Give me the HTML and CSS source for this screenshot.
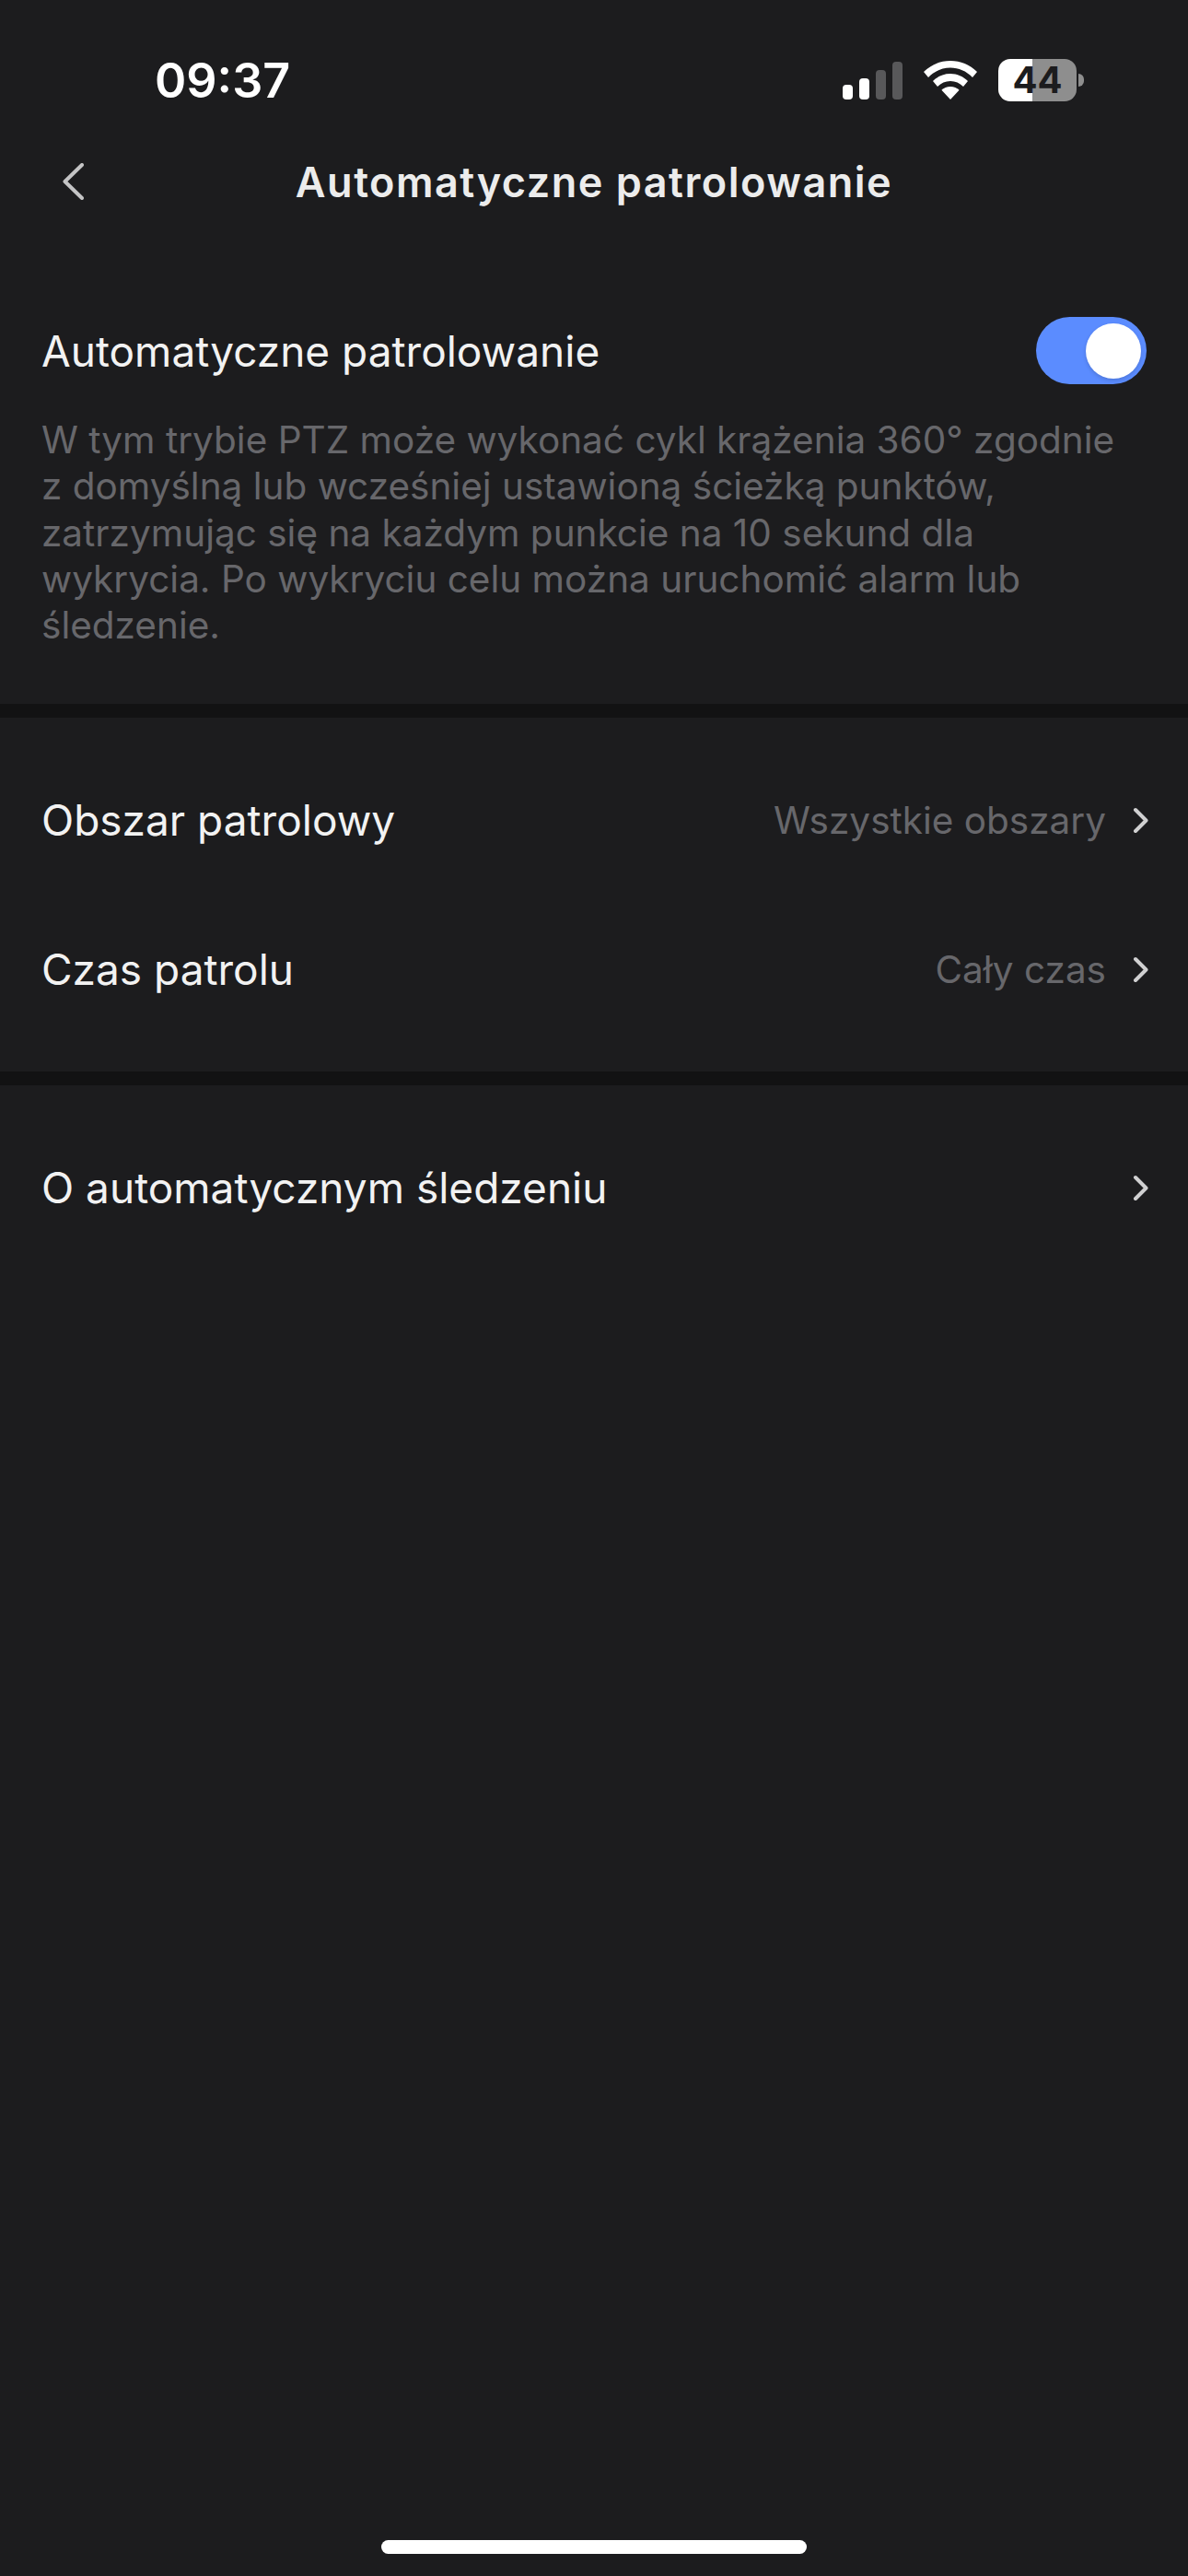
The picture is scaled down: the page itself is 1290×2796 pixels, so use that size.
FILE: index.html

```html
<!DOCTYPE html>
<html lang="pl">
<head>
  <meta charset="UTF-8" />
  <meta name="viewport" content="width=device-width, initial-scale=1.0"/>
  <title>Automatyczne patrolowanie</title>
  <link rel="stylesheet" href="styles.css">
</head>
<body>
  <div class="status-bar">
    <span class="time">09:37</span>
    <div class="status-icons">
      <div class="signal">
        <span class="bar bar-1"></span>
        <span class="bar bar-2"></span>
        <span class="bar bar-3 off"></span>
        <span class="bar bar-4 off"></span>
      </div>
      <svg class="wifi" width="58" height="42" viewBox="0 0 58 42">
        <path fill="#fff" d="M29 0C18 0 8 4 0 12l5 6C12 11 20 7.500 29 7.500S46 11 53 18l5-6C50 4 40 0 29 0Z"/>
        <path fill="#fff" d="M29 14c-7.500 0-14 3-19 8l5 6c4-3.700 8.500-6 14-6s10 2.300 14 6l5-6c-5-5-11.500-8-19-8Z"/>
        <path fill="#fff" d="M29 28c-3.800 0-7.200 1.400-9.600 3.700L29 42l9.600-10.300C36.200 29.400 32.800 28 29 28Z"/>
      </svg>
      <div class="battery">44</div>
    </div>
  </div>

  <div class="nav-bar">
    <svg class="back" width="23" height="40" viewBox="0 0 23 40">
      <path d="M21 2 2.500 20 21 38" fill="none" stroke="#c4c4c5" stroke-width="4" stroke-linecap="round" stroke-linejoin="round"/>
    </svg>
    <h1>Automatyczne patrolowanie</h1>
  </div>

  <div class="section section-top">
    <div class="switch-row">
      <span class="label">Automatyczne patrolowanie</span>
      <div class="switch"><span class="knob"></span></div>
    </div>
    <p class="description">W tym trybie PTZ może wykonać cykl krążenia 360° zgodnie<br>z domyślną lub wcześniej ustawioną ścieżką punktów,<br>zatrzymując się na każdym punkcie na 10 sekund dla<br>wykrycia. Po wykryciu celu można uruchomić alarm lub<br>śledzenie.</p>
  </div>

  <div class="section section-list">
    <div class="row">
      <span class="label">Obszar patrolowy</span>
      <span class="value">Wszystkie obszary</span>
      <svg class="chevron" width="17" height="29" viewBox="0 0 17 29"><path d="M3 3 14.500 14.500 3 26" fill="none" stroke="#d0d0d1" stroke-width="4" stroke-linecap="round" stroke-linejoin="round"/></svg>
    </div>
    <div class="row">
      <span class="label">Czas patrolu</span>
      <span class="value">Cały czas</span>
      <svg class="chevron" width="17" height="29" viewBox="0 0 17 29"><path d="M3 3 14.500 14.500 3 26" fill="none" stroke="#d0d0d1" stroke-width="4" stroke-linecap="round" stroke-linejoin="round"/></svg>
    </div>
  </div>

  <div class="section section-list section-last">
    <div class="row">
      <span class="label">O automatycznym śledzeniu</span>
      <svg class="chevron" width="17" height="29" viewBox="0 0 17 29"><path d="M3 3 14.500 14.500 3 26" fill="none" stroke="#d0d0d1" stroke-width="4" stroke-linecap="round" stroke-linejoin="round"/></svg>
    </div>
  </div>

  <div class="home-area">
    <div class="home-indicator"></div>
  </div>
</body>
</html>
```

FILE: styles.css

```css
* {
  box-sizing: border-box;
}
html, body {
  height: 100%;
}
body {
  font-family: 'Inter', 'Liberation Sans', sans-serif;
  background: #1c1c1e;
  color: #f2f2f2;
  margin: 0;
  display: flex;
  flex-direction: column;
  overflow: hidden;
}

/* status bar */
.status-bar {
  display: flex;
  justify-content: space-between;
  align-items: center;
  height: 50px;
  margin-top: 62px;
  padding: 0 121px 0 168px;
}
.time {
  font-size: 52px;
  font-weight: 600;
  color: #fff;
}
.status-icons {
  display: flex;
  align-items: center;
  gap: 23px;
}
.signal {
  display: flex;
  align-items: flex-end;
  gap: 7px;
  height: 41px;
}
.bar {
  width: 11px;
  border-radius: 4px;
  background: #fff;
}
.bar.off {
  background: #58585a;
}
.bar-1 { height: 16px; }
.bar-2 { height: 23px; }
.bar-3 { height: 32px; }
.bar-4 { height: 41px; }
.battery {
  position: relative;
  width: 85px;
  height: 46px;
  border-radius: 13px;
  background: linear-gradient(to right, #fff 44%, #8e8e8e 44%);
  color: #1c1c1e;
  font-size: 40px;
  font-weight: 700;
  line-height: 46px;
  text-align: center;
}
.battery::after {
  content: "";
  position: absolute;
  top: 16px;
  right: -8px;
  width: 6px;
  height: 14px;
  border-radius: 0 6px 6px 0;
  background: #8e8e8e;
}

/* nav */
.nav-bar {
  position: relative;
  display: flex;
  justify-content: center;
  align-items: center;
  height: 170px;
}
.back {
  position: absolute;
  left: 68px;
  top: 65px;
}
.nav-bar h1 {
  margin: 0;
  font-size: 45px;
  font-weight: 600;
  letter-spacing: 1.500px;
  color: #ececec;
}

.section {
  border-bottom: 15px solid #121213;
}
.section-top {
  padding: 58px 45px 60px 45px;
}
.section-list {
  padding: 30px 43px 30px 45px;
}
.section-last {
  border-bottom: none;
}
.switch-row {
  display: flex;
  justify-content: space-between;
  align-items: center;
  height: 81px;
  margin-bottom: 32px;
}
.label {
  font-size: 46px;
  color: #f2f2f2;
}
.switch {
  display: flex;
  justify-content: flex-end;
  align-items: center;
  width: 120px;
  height: 73px;
  padding-right: 6px;
  border-radius: 37px;
  background: #5b8cff;
}
.knob {
  width: 60px;
  height: 60px;
  border-radius: 50%;
  background: #fff;
  box-shadow: 0 2px 4px rgba(0, 0, 0, 0.15);
}
.description {
  margin: 0;
  font-size: 40.500px;
  line-height: 50.300px;
  color: #67676b;
}
.row {
  display: flex;
  align-items: center;
  height: 162px;
}
.row .label {
  margin-right: auto;
}
.value {
  font-size: 40.500px;
  color: #67676b;
  margin-right: 29px;
}
.home-area {
  flex: 1;
  display: flex;
  justify-content: center;
  align-items: flex-end;
  padding-bottom: 24px;
}
.home-indicator {
  width: 462px;
  height: 15px;
  border-radius: 8px;
  background: #fff;
}
```
